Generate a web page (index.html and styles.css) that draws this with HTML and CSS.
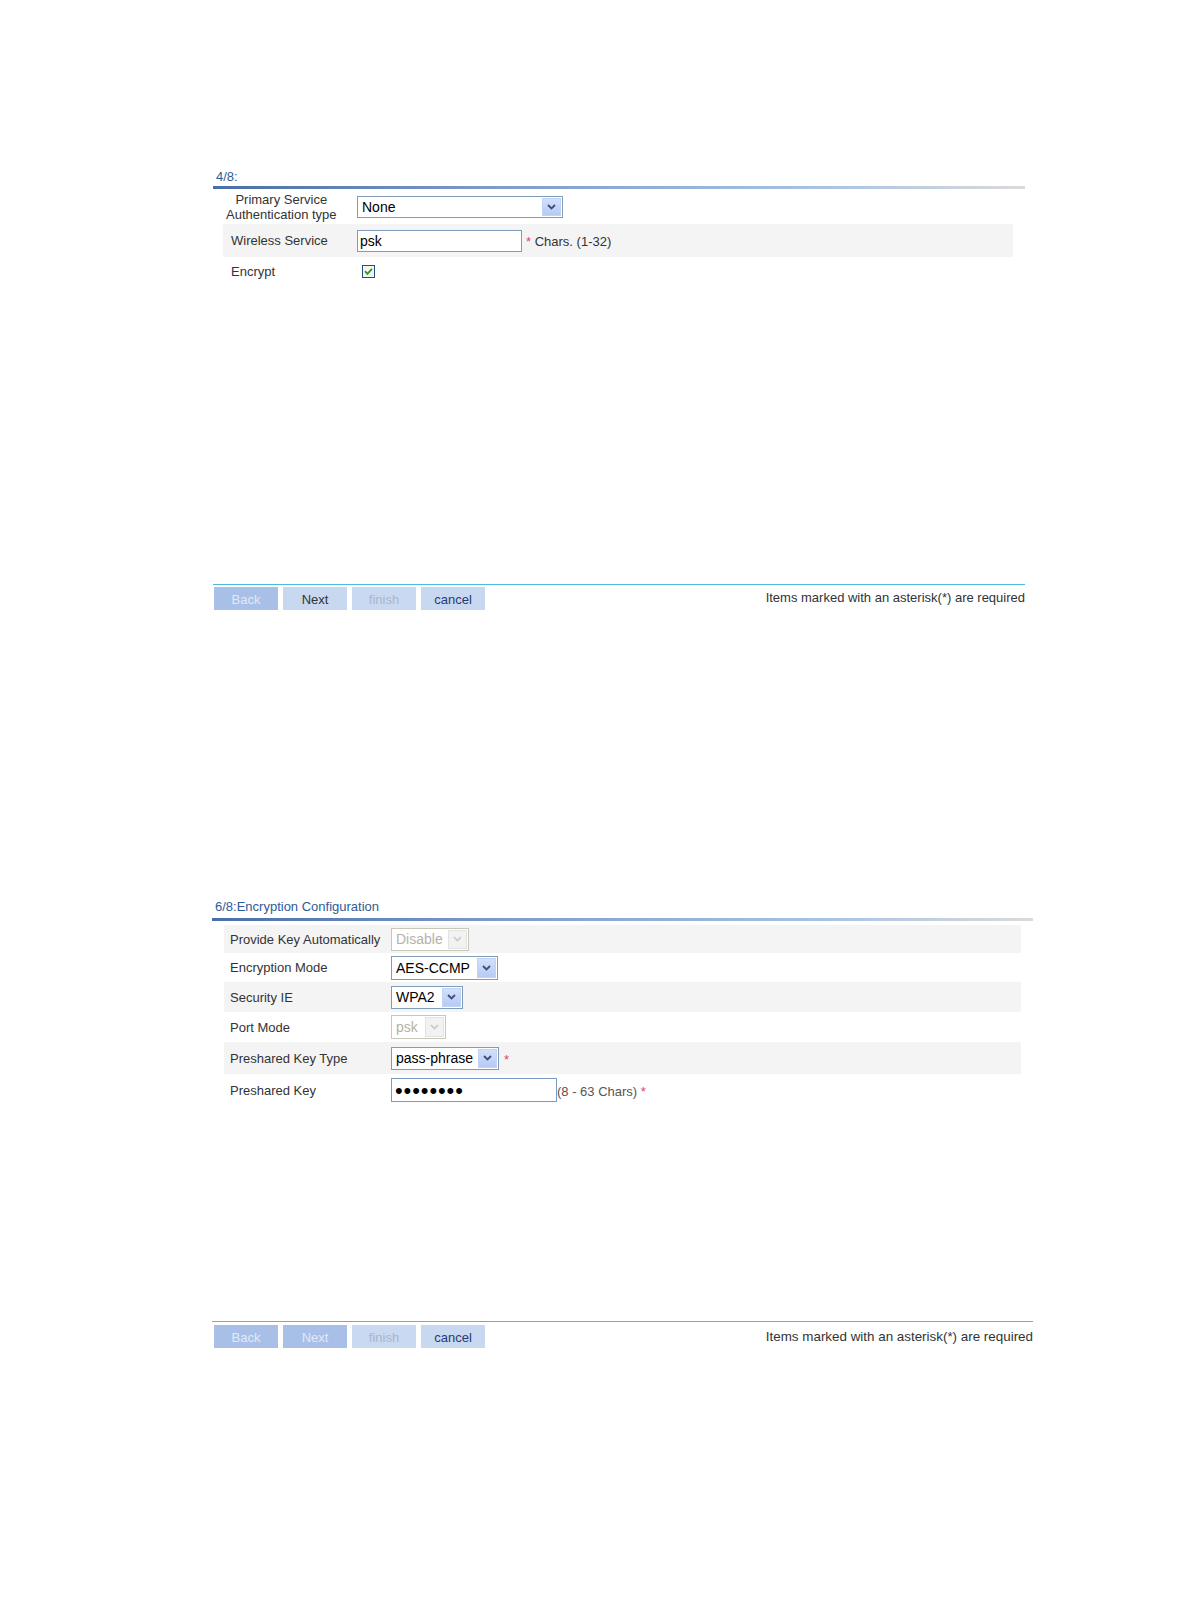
FILE: index.html
```html
<!DOCTYPE html>
<html>
<head>
<meta charset="utf-8">
<link rel="stylesheet" href="styles.css">
</head>
<body>
<div class="wizard w1">
  <div class="w-title">4/8:</div>
  <div class="w-rule"></div>
  <div class="w-body">
    <div class="row r34">
      <div class="lbl lbl-center"><span class="lbl-two">Primary Service<br>Authentication type</span></div>
      <div class="ctl">
        <div class="sel" style="width:206px;height:22px"><span class="sel-text">None</span><span class="sel-btn"><svg width="9" height="6" viewBox="0 0 9 6"><path d="M1 1 L4.5 4.5 L8 1" fill="none" stroke="#3d4f78" stroke-width="1.8"/></svg></span></div>
      </div>
    </div>
    <div class="row r33 grey">
      <div class="lbl">Wireless Service</div>
      <div class="ctl">
        <div class="inp" style="width:165px;height:22px">psk</div>
        <span class="note"><span class="star">*</span> Chars. (1-32)</span>
      </div>
    </div>
    <div class="row r29">
      <div class="lbl">Encrypt</div>
      <div class="ctl">
        <span class="chk"><svg width="13" height="13" viewBox="0 0 13 13"><rect x="0.5" y="0.5" width="12" height="12" fill="#f4f4f0" stroke="#1c5180"/><path d="M3 6.2 L5.4 8.8 L10 3.8" fill="none" stroke="#21a121" stroke-width="1.8"/></svg></span>
      </div>
    </div>
  </div>
  <div class="w-foot">
    <div class="btns">
      <span class="btn dis">Back</span>
      <span class="btn act">Next</span>
      <span class="btn dis2">finish</span>
      <span class="btn act blue">cancel</span>
    </div>
    <div class="req">Items marked with an asterisk(*) are required</div>
  </div>
</div>

<div class="wizard w2">
  <div class="w-title">6/8:Encryption Configuration</div>
  <div class="w-rule"></div>
  <div class="w-body">
    <div class="row h28 grey">
      <div class="lbl">Provide Key Automatically</div>
      <div class="ctl">
        <div class="sel off" style="width:78px;height:23px"><span class="sel-text">Disable</span><span class="sel-btn"><svg width="9" height="6" viewBox="0 0 9 6"><path d="M1 1 L4.5 4.5 L8 1" fill="none" stroke="#c8c8c8" stroke-width="1.6"/></svg></span></div>
      </div>
    </div>
    <div class="row h29">
      <div class="lbl">Encryption Mode</div>
      <div class="ctl">
        <div class="sel" style="width:107px;height:24px"><span class="sel-text">AES-CCMP</span><span class="sel-btn"><svg width="9" height="6" viewBox="0 0 9 6"><path d="M1 1 L4.5 4.5 L8 1" fill="none" stroke="#3d4f78" stroke-width="1.8"/></svg></span></div>
      </div>
    </div>
    <div class="row h30 grey">
      <div class="lbl">Security IE</div>
      <div class="ctl">
        <div class="sel" style="width:72px;height:23px"><span class="sel-text">WPA2</span><span class="sel-btn"><svg width="9" height="6" viewBox="0 0 9 6"><path d="M1 1 L4.5 4.5 L8 1" fill="none" stroke="#3d4f78" stroke-width="1.8"/></svg></span></div>
      </div>
    </div>
    <div class="row h30">
      <div class="lbl">Port Mode</div>
      <div class="ctl">
        <div class="sel off" style="width:55px;height:24px"><span class="sel-text">psk</span><span class="sel-btn"><svg width="9" height="6" viewBox="0 0 9 6"><path d="M1 1 L4.5 4.5 L8 1" fill="none" stroke="#c8c8c8" stroke-width="1.6"/></svg></span></div>
      </div>
    </div>
    <div class="row h32 grey">
      <div class="lbl">Preshared Key Type</div>
      <div class="ctl">
        <div class="sel" style="width:108px;height:23px"><span class="sel-text">pass-phrase</span><span class="sel-btn"><svg width="9" height="6" viewBox="0 0 9 6"><path d="M1 1 L4.5 4.5 L8 1" fill="none" stroke="#3d4f78" stroke-width="1.8"/></svg></span></div>
        <span class="star sp">*</span>
      </div>
    </div>
    <div class="row h32">
      <div class="lbl">Preshared Key</div>
      <div class="ctl">
        <div class="inp pw" style="width:166px;height:24px">••••••••</div><span class="note2">(8 - 63 Chars) <span class="star">*</span></span>
      </div>
    </div>
  </div>
  <div class="w-foot">
    <div class="btns">
      <span class="btn dis">Back</span>
      <span class="btn dis">Next</span>
      <span class="btn dis2">finish</span>
      <span class="btn act blue">cancel</span>
    </div>
    <div class="req">Items marked with an asterisk(*) are required</div>
  </div>
</div>
</body>
</html>
```

FILE: styles.css
```css
html, body {
  margin: 0;
  padding: 0;
  background: #ffffff;
}
body {
  font-family: "Liberation Sans", Arial, sans-serif;
  font-size: 13px;
  color: #333333;
}
.wizard {
  display: flex;
  flex-direction: column;
}
.w1 {
  margin: 165px 0 0 213px;
  width: 812px;
}
.w2 {
  margin: 285px 0 0 212px;
  width: 821px;
}
.w-title {
  font-size: 13px;
  line-height: 15px;
  color: #2f5b98;
  padding: 4px 0 2px 3px;
}
.w2 .w-title {
  padding-bottom: 4px;
}
.w-rule {
  height: 3px;
  background: linear-gradient(to right, #4a6ea8 0%, #7d9ccb 35%, #a9c3e3 75%, #dadada 100%);
}
.w-body {
  display: flex;
  flex-direction: column;
}
.w1 .w-body {
  height: 395px;
  padding: 1px 12px 0 10px;
  box-sizing: border-box;
}
.w2 .w-body {
  height: 400px;
  padding: 4px 12px 0 12px;
  box-sizing: border-box;
}
.row {
  display: flex;
  align-items: center;
}
.grey {
  background: #f4f4f4;
}
.r34 { height: 34px; }
.r33 { height: 33px; }
.r29 { height: 29px; }
.h28 { height: 28px; }
.h29 { height: 29px; }
.h30 { height: 30px; }
.h32 { height: 32px; }
.lbl {
  flex: none;
  box-sizing: border-box;
  line-height: 15px;
  color: #333333;
}
.w1 .lbl {
  width: 134px;
  padding-left: 8px;
}
.w1 .lbl-center {
  padding-left: 3px;
}
.lbl-two {
  display: inline-block;
  text-align: center;
  white-space: nowrap;
}
.w2 .lbl {
  width: 167px;
  padding-left: 6px;
}
.ctl {
  display: flex;
  align-items: center;
}
.sel {
  box-sizing: border-box;
  border: 1px solid #7f9db9;
  background: #ffffff;
  display: flex;
  align-items: stretch;
  justify-content: space-between;
  padding: 1px;
  color: #000000;
  font-size: 14px;
}
.sel-text {
  display: flex;
  align-items: center;
  padding-left: 3px;
  white-space: nowrap;
}
.sel-btn {
  width: 19px;
  flex: none;
  display: flex;
  align-items: center;
  justify-content: center;
  background: linear-gradient(to bottom, #d3e0fb, #b6caf5);
  border: 1px solid #c3d3f7;
  box-sizing: border-box;
}
.sel.off {
  border-color: #c9c7ba;
  color: #b4b2a8;
}
.sel.off .sel-btn {
  background: #f2f2f2;
  border-color: #e2e2e2;
}
.inp {
  box-sizing: border-box;
  border: 1px solid #7f9db9;
  background: #ffffff;
  color: #000000;
  font-size: 14px;
  display: flex;
  align-items: center;
  padding-left: 2px;
}
.pw {
  font-size: 22px;
  letter-spacing: 0.9px;
  padding-left: 3px;
  padding-top: 1px;
  border-color: #7a9bc4;
}
.note {
  margin-left: 4px;
  color: #333333;
  padding-top: 2px;
}
.note2 {
  color: #555555;
  padding-top: 3px;
}
.star {
  color: #e0446a;
}
.sp {
  margin-left: 5px;
  padding-top: 2px;
}
.chk {
  display: flex;
  margin-left: 5px;
}
.w-foot {
  border-top: 1px solid #4fb9e6;
  display: flex;
  justify-content: space-between;
  align-items: flex-start;
}
.w1 .w-foot {
  height: 26px;
  padding: 2px 0 0 1px;
  box-sizing: border-box;
}
.w2 .w-foot {
  height: 28px;
  padding: 3px 0 0 2px;
  box-sizing: border-box;
}
.btns {
  display: flex;
  gap: 5px;
}
.btn {
  width: 64px;
  height: 23px;
  box-sizing: border-box;
  display: flex;
  align-items: center;
  justify-content: center;
  font-size: 13px;
  padding-top: 2px;
}
.btn.dis {
  background: #a8bfe7;
  color: #e2e9f7;
}
.btn.dis2 {
  background: #c9d9f2;
  color: #a9b5cc;
}
.btn.act {
  background: #c8d8f1;
  color: #333333;
}
.btn.blue {
  color: #283a70;
}
.req {
  padding-top: 3px;
  color: #333333;
  white-space: nowrap;
}
.w2 .req {
  padding-top: 4px;
  font-size: 13.4px;
}
```
